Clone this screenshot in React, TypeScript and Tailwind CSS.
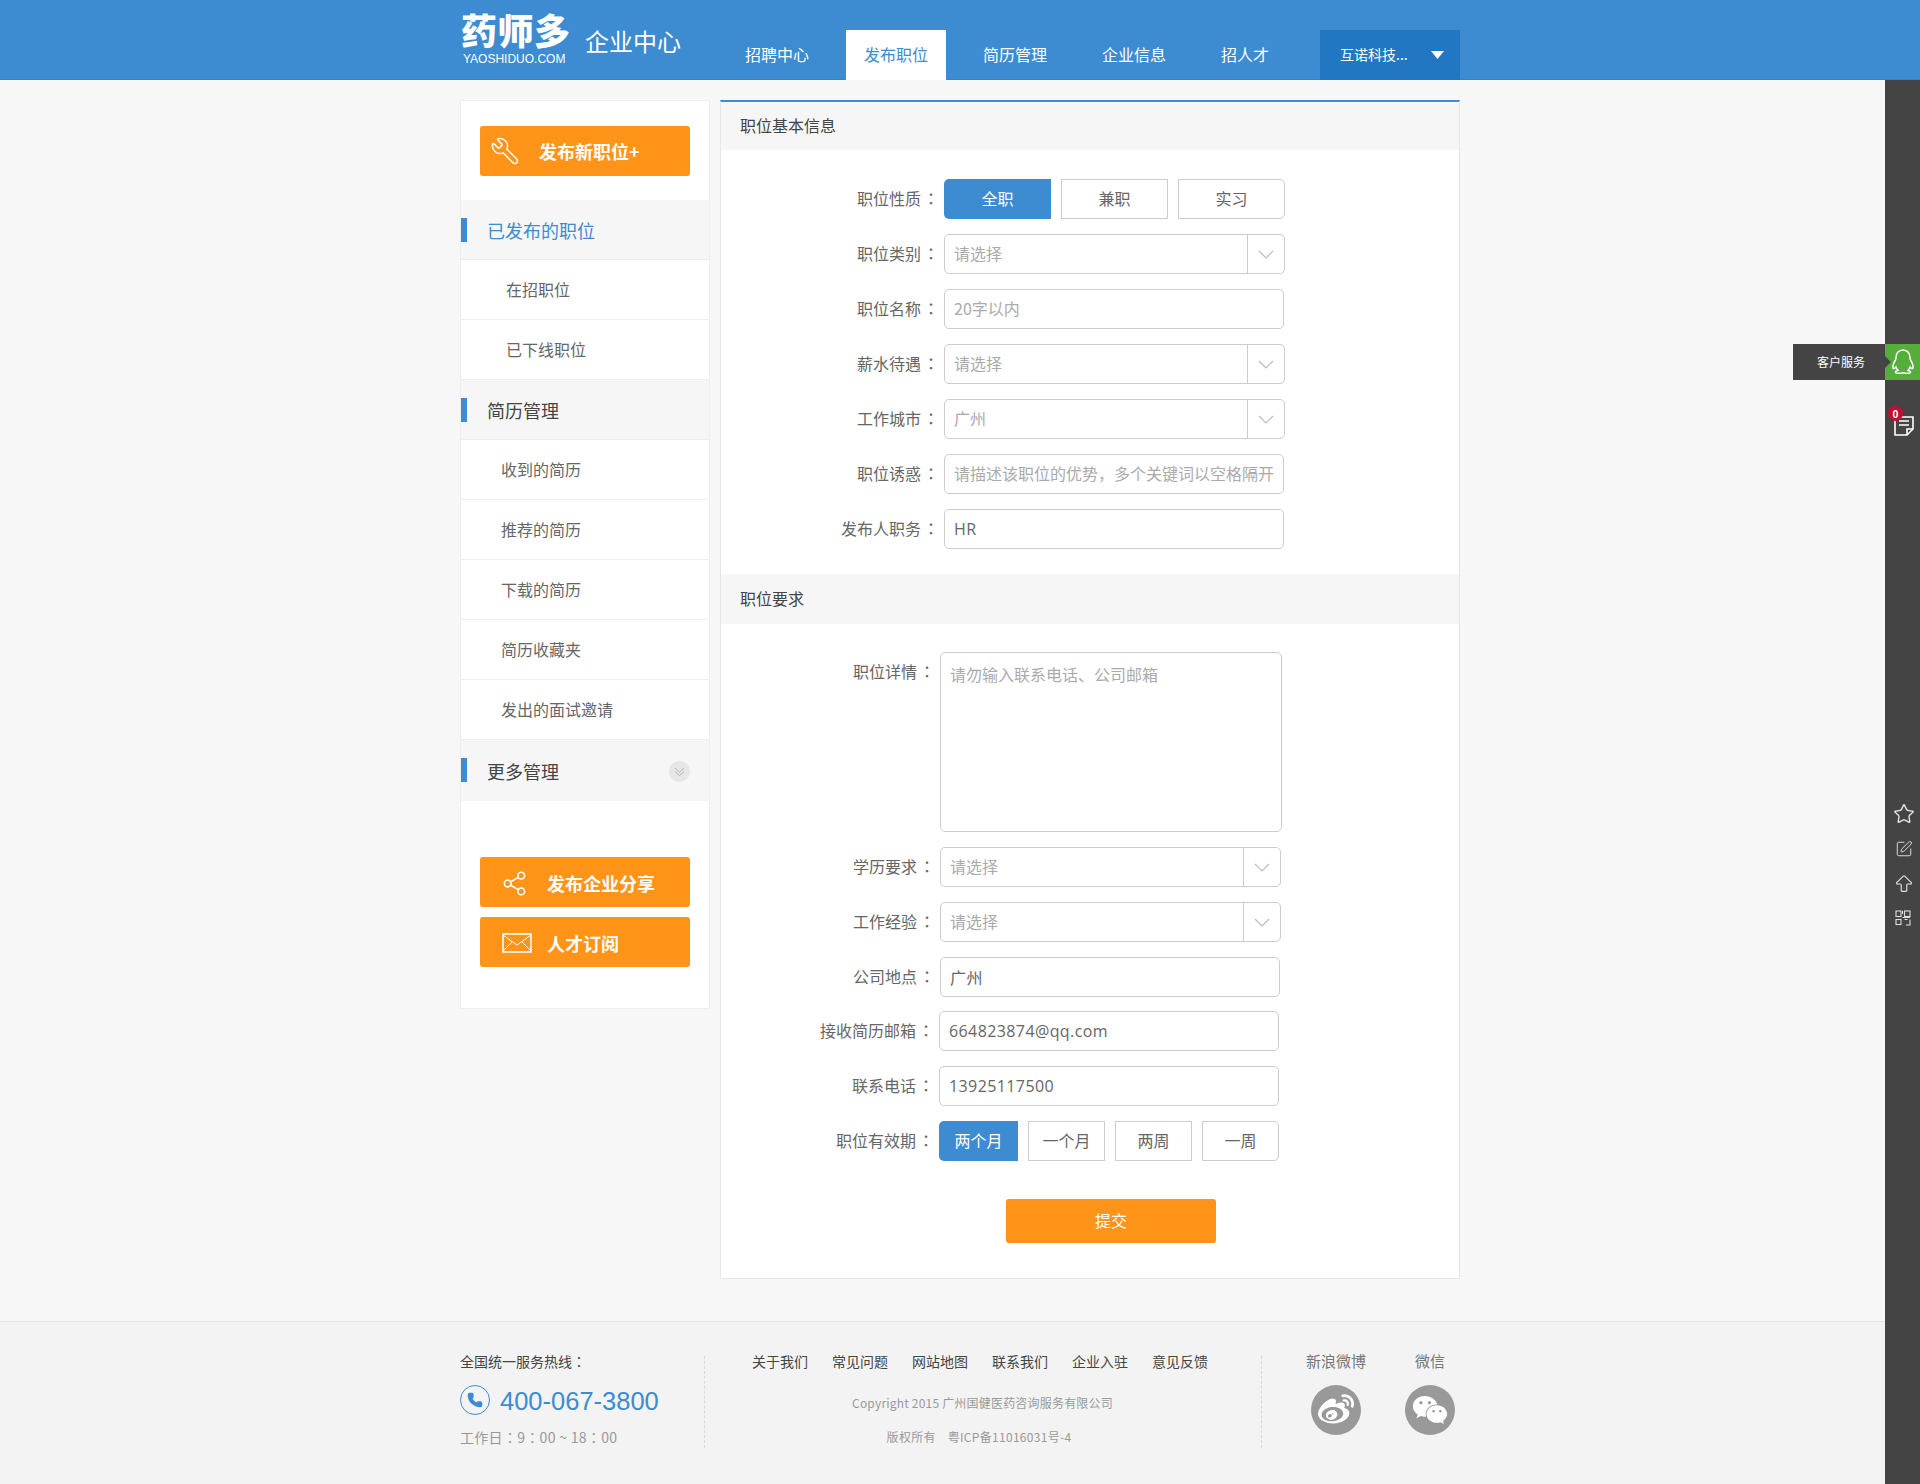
import React from "react";
import { Wrench, Share2, Phone, Star, SquarePen, ArrowBigUp } from "lucide-react";
import { FaWeibo, FaWeixin } from "react-icons/fa";

const Colon = ({ className = "" }: { className?: string }) => (
  <span className={"font-['Noto_Sans_CJK_TC',sans-serif] " + className}>：</span>
);

function Label({ text, className = "" }: { text: string; className?: string }) {
  return (
    <div className={"h-10 shrink-0 text-right text-base leading-[38px] text-[#666] " + className}>
      {text}
      <Colon className="pl-[2px]" />
    </div>
  );
}

const inputCls =
  "h-10 border border-[#ccc] rounded-[5px] px-[9px] pb-[2px] text-base bg-white outline-none placeholder:text-[#aaa]";
const valueCls =
  "h-10 border border-[#ccc] rounded-[5px] px-[9px] text-base bg-white outline-none text-[#666] font-['Open_Sans','Noto_Sans_CJK_SC',sans-serif] tracking-[0.4px]";

function Chevron() {
  return (
    <svg width="16" height="9" viewBox="0 0 16 9" fill="none" stroke="#bbb" strokeWidth="1.2">
      <polyline points="1,1 8,8 15,1" />
    </svg>
  );
}

function SelectBox({ text, className = "" }: { text: string; className?: string }) {
  return (
    <div className={"flex h-10 items-center rounded-[5px] border border-[#ccc] bg-white " + className}>
      <div className="flex-1 px-[9px] pb-[2px] text-base text-[#aaa]">{text}</div>
      <div className="flex h-full w-[37px] items-center justify-center border-l border-[#ccc]">
        <Chevron />
      </div>
    </div>
  );
}

function SideSection({ text, active, more }: { text: string; active?: boolean; more?: boolean }) {
  return (
    <div
      className={
        "relative flex items-center bg-[#f6f6f6] pl-[26px] " +
        (more ? "h-[61px]" : "h-[60px] border-b border-[#eee]")
      }
    >
      <div className="absolute left-0 top-[18px] h-6 w-1.5 bg-[#3d8bd0]" />
      <span className={"text-lg " + (active ? "text-[#3d8bd0]" : "text-[#444]")}>{text}</span>
      {more && (
        <div className="ml-auto mr-[19px] mt-[2px] flex h-[21px] w-[21px] items-center justify-center rounded-full bg-[#e6e6e6]">
          <svg width="11" height="10" viewBox="0 0 11 10" fill="none" stroke="#aaa" strokeWidth="0.8">
            <polyline points="1,1 5.5,5 10,1" />
            <polyline points="1,4.5 5.5,8.5 10,4.5" />
          </svg>
        </div>
      )}
    </div>
  );
}

function SideItem({ text, pl }: { text: string; pl: string }) {
  return (
    <div className={"flex h-[60px] items-center border-b border-[#eee] pb-[2px] text-base text-[#666] " + pl}>{text}</div>
  );
}

function OrangeButton({ icon, text, cls }: { icon: React.ReactNode; text: string; cls: string }) {
  return (
    <div className={"flex h-[50px] w-[210px] items-center rounded-[3px] bg-[#ff9419] text-lg font-bold text-white " + cls}>
      {icon}
      <span>{text}</span>
    </div>
  );
}

function Choice({ text, active, className = "" }: { text: string; active?: boolean; className?: string }) {
  return (
    <div
      className={
        "flex h-10 items-center justify-center pb-[2px] text-base " +
        (active ? "bg-[#3d8bd0] text-white " : "border border-[#ccc] bg-white text-[#666] ") +
        className
      }
    >
      {text}
    </div>
  );
}

function SectionTitle({ text }: { text: string }) {
  return <div className="flex h-[50px] items-center bg-[#f6f6f6] pb-[2px] pl-[19px] text-base text-[#444]">{text}</div>;
}

export default function App() {
  const navs = ["招聘中心", "发布职位", "简历管理", "企业信息", "招人才"];
  const links = ["关于我们", "常见问题", "网站地图", "联系我们", "企业入驻", "意见反馈"];
  return (
    <div className="relative h-[1484px] overflow-hidden bg-[#f7f7f7] font-['Noto_Sans_CJK_SC',sans-serif]">
      {/* Header */}
      <header className="h-20 border-b border-[#3a84c6] bg-[#3d8bd0]">
        <div className="mx-auto flex h-20 w-[1000px]">
          <div className="w-[125px] pl-px pt-[7px] text-white">
            <div className="text-[36px] font-black leading-[44px] tracking-[0.5px]">药师多</div>
            <div className="mt-px pl-[2px] font-['Liberation_Sans',sans-serif] text-xs leading-[15px]">YAOSHIDUO.COM</div>
          </div>
          <div className="w-[142px] pt-[23px] text-2xl leading-9 text-white">企业中心</div>
          <nav className="flex items-end gap-[19px]">
            {navs.map((n, i) => (
              <div
                key={n}
                className={
                  "flex h-[50px] items-center justify-center pb-[2px] text-base " +
                  (i === 1 ? "w-[100px] bg-white text-[#3d8bd0]" : "px-[18px] text-white")
                }
              >
                {n}
              </div>
            ))}
          </nav>
          <div className="ml-auto mt-[30px] flex h-[50px] w-[140px] items-center bg-[#2277c2] pl-5 text-sm text-white">
            <span className="w-[91px] pb-[2px]">互诺科技...</span>
            <svg width="13" height="8" viewBox="0 0 13 8" fill="#fff">
              <polygon points="0,0 13,0 6.5,8" />
            </svg>
          </div>
        </div>
      </header>

      {/* Body */}
      <div className="mx-auto mt-5 flex h-[1179px] w-[1000px] items-start justify-between">
        {/* Sidebar */}
        <aside className="h-[909px] w-[250px] border border-[#eee] bg-white">
          <div className="px-[19px] pt-[25px]">
            <OrangeButton
              cls="gap-[19px] pl-[10px]"
              text="发布新职位+"
              icon={<Wrench size={30} strokeWidth={1.2} className="-scale-x-100" />}
            />
          </div>
          <div className="mt-6">
            <SideSection text="已发布的职位" active />
            <SideItem text="在招职位" pl="pl-[45px]" />
            <SideItem text="已下线职位" pl="pl-[45px]" />
            <SideSection text="简历管理" />
            <SideItem text="收到的简历" pl="pl-10" />
            <SideItem text="推荐的简历" pl="pl-10" />
            <SideItem text="下载的简历" pl="pl-10" />
            <SideItem text="简历收藏夹" pl="pl-10" />
            <SideItem text="发出的面试邀请" pl="pl-10" />
            <SideSection text="更多管理" more />
          </div>
          <div className="flex flex-col gap-2.5 px-[19px] pt-14">
            <OrangeButton
              cls="gap-[19px] pl-[21px] pt-[2px]"
              text="发布企业分享"
              icon={<Share2 size={27} strokeWidth={1.4} />}
            />
            <OrangeButton
              cls="gap-[15px] pl-[22px] pt-[2px]"
              text="人才订阅"
              icon={
                <svg width="30" height="20" viewBox="0 0 30 20" fill="none" stroke="#fff">
                  <rect x="1" y="1" width="28" height="18" strokeWidth="1.6" />
                  <polyline points="1,2 15,12 29,2" strokeWidth="1" />
                  <line x1="1" y1="18" x2="10" y2="9" strokeWidth="1" />
                  <line x1="29" y1="18" x2="20" y2="9" strokeWidth="1" />
                </svg>
              }
            />
          </div>
        </aside>

        {/* Main */}
        <main className="h-[1179px] w-[740px] border-x border-b border-t-2 border-[#e6e6e6] border-t-[#3d8bd0] bg-white">
          <div className="h-12 overflow-hidden">
            <div className="-mt-px">
              <SectionTitle text="职位基本信息" />
            </div>
          </div>
          <div className="flex flex-col gap-[15px] pt-[29px]">
            <div className="flex">
              <Label text="职位性质" className="w-[218px]" />
              <div className="ml-[5px] flex gap-2.5">
                <Choice text="全职" active className="w-[107px] rounded-l-[5px]" />
                <Choice text="兼职" className="w-[107px]" />
                <Choice text="实习" className="w-[107px] rounded-r-[5px]" />
              </div>
            </div>
            <div className="flex">
              <Label text="职位类别" className="w-[218px]" />
              <SelectBox text="请选择" className="ml-[5px] w-[341px]" />
            </div>
            <div className="flex">
              <Label text="职位名称" className="w-[218px]" />
              <input readOnly placeholder="20字以内" className={"ml-[5px] w-[340px] " + inputCls} />
            </div>
            <div className="flex">
              <Label text="薪水待遇" className="w-[218px]" />
              <SelectBox text="请选择" className="ml-[5px] w-[341px]" />
            </div>
            <div className="flex">
              <Label text="工作城市" className="w-[218px]" />
              <SelectBox text="广州" className="ml-[5px] w-[341px]" />
            </div>
            <div className="flex">
              <Label text="职位诱惑" className="w-[218px]" />
              <input
                readOnly
                placeholder="请描述该职位的优势，多个关键词以空格隔开"
                className={"ml-[5px] w-[340px] " + inputCls}
              />
            </div>
            <div className="flex">
              <Label text="发布人职务" className="w-[218px]" />
              <input readOnly value="HR" className={"ml-[5px] w-[340px] " + valueCls} />
            </div>
          </div>

          <div className="mt-[25px]">
            <SectionTitle text="职位要求" />
          </div>

          <div className="flex flex-col pt-7">
            <div className="flex">
              <Label text="职位详情" className="w-[214px]" />
              <textarea
                readOnly
                placeholder="请勿输入联系电话、公司邮箱"
                className="ml-[5px] h-[180px] w-[342px] resize-none rounded-[5px] border border-[#ccc] px-[9px] py-[9px] text-base leading-6 text-[#666] outline-none placeholder:text-[#aaa]"
              />
            </div>
            <div className="mt-[15px] flex">
              <Label text="学历要求" className="w-[214px]" />
              <SelectBox text="请选择" className="ml-[5px] w-[341px]" />
            </div>
            <div className="mt-[15px] flex">
              <Label text="工作经验" className="w-[214px]" />
              <SelectBox text="请选择" className="ml-[5px] w-[341px]" />
            </div>
            <div className="mt-[15px] flex">
              <Label text="公司地点" className="w-[214px]" />
              <input readOnly value="广州" className={"ml-[5px] w-[340px] " + valueCls} />
            </div>
            <div className="mt-[14px] flex">
              <Label text="接收简历邮箱" className="w-[213px]" />
              <input readOnly value="664823874@qq.com" className={"ml-[5px] w-[340px] " + valueCls} />
            </div>
            <div className="mt-[15px] flex">
              <Label text="联系电话" className="w-[213px]" />
              <input readOnly value="13925117500" className={"ml-[5px] w-[340px] " + valueCls} />
            </div>
            <div className="mt-[15px] flex">
              <Label text="职位有效期" className="w-[213px]" />
              <div className="ml-[5px] flex gap-2.5">
                <Choice text="两个月" active className="w-[79px] rounded-l-[5px]" />
                <Choice text="一个月" className="w-[77px]" />
                <Choice text="两周" className="w-[77px]" />
                <Choice text="一周" className="w-[77px] rounded-r-[5px]" />
              </div>
            </div>
            <div className="ml-[285px] mt-[38px] flex h-11 w-[210px] items-center justify-center rounded-[3px] bg-[#ff9419] pb-[2px] text-base text-white">
              提交
            </div>
          </div>
        </main>
      </div>

      {/* Footer */}
      <footer className="mt-[42px] h-[163px] border-t border-[#e6e6e6] bg-[#f3f3f3]">
        <div className="mx-auto flex w-[1000px] pt-[34px]">
          <div className="h-[92px] w-[245px] shrink-0 border-r border-dashed border-[#d8d8d8]">
            <div className="-mt-[2px] text-sm leading-[14px] text-[#444]">
              全国统一服务热线
              <Colon />
            </div>
            <div className="mt-[17px] flex h-[30px] items-center gap-2.5">
              <div className="flex h-[30px] w-[30px] shrink-0 items-center justify-center rounded-full border border-[#3d8bd0]">
                <Phone size={16} fill="#3d8bd0" stroke="#3d8bd0" />
              </div>
              <span className="pt-[3px] font-['Liberation_Sans',sans-serif] text-[25.500px] text-[#3d8bd0]">400-067-3800</span>
            </div>
            <div className="mt-[13px] text-sm leading-[18px] tracking-[0.3px] text-[#999]">
              工作日
              <Colon />9
              <Colon />
              00 ~ 18
              <Colon />
              00
            </div>
          </div>
          <div className="w-[556px] shrink-0 text-center">
            <div className="-mt-[2px] flex justify-center gap-6 pr-[6px] text-sm leading-[14px] text-[#444]">
              {links.map((l) => (
                <span key={l}>{l}</span>
              ))}
            </div>
            <div className="mt-[27px] pr-px text-xs leading-4 tracking-[0.2px] text-[#999]">
              Copyright 2015 广州国健医药咨询服务有限公司
            </div>
            <div className="mt-[18px] pr-2 text-xs leading-4 tracking-[0.3px] text-[#999]">
              版权所有&nbsp;&nbsp;&nbsp;&nbsp;粤ICP备11016031号-4
            </div>
          </div>
          <div className="flex h-[92px] w-[199px] shrink-0 border-l border-dashed border-[#d8d8d8] pl-[27px] text-center text-[15px] text-[#777]">
            <div className="w-[94px] shrink-0">
              <div className="-mt-[2px] leading-[14px]">新浪微博</div>
              <div className="mx-auto mt-[17px] flex h-[50px] w-[50px] items-center justify-center rounded-full bg-[#999]">
                <FaWeibo size={36} color="#fff" />
              </div>
            </div>
            <div className="w-[94px] shrink-0">
              <div className="-mt-[2px] leading-[14px]">微信</div>
              <div className="mx-auto mt-[17px] flex h-[50px] w-[50px] items-center justify-center rounded-full bg-[#999]">
                <FaWeixin size={36} color="#fff" />
              </div>
            </div>
          </div>
        </div>
      </footer>

      {/* Right floating bar */}
      <div className="absolute bottom-0 right-0 top-20 w-[35px] bg-[#444]" />
      <div className="absolute right-[35px] top-[344px] flex h-9 w-[92px] items-center justify-center bg-[#444] pl-1 text-xs text-white">
        客户服务
      </div>
      <div className="absolute right-0 top-[344px] flex h-9 w-[35px] items-center justify-center bg-[#55ae3a]">
        <svg width="24" height="28" viewBox="0 0 24 28" fill="none" stroke="#fff" strokeWidth="1.5">
          <path d="M12 2c-4.500 0-7 3.500-7 7.500 0 1-.2 2-.8 3C3 14.500 1.500 17.500 2 20c.6 1 2 .2 3-1 .5 1.500 1.200 2.500 2 3.300-1.500.5-2.800 1-2.500 2.200.5 1.200 5 1 7.500.2 2.500.8 7 1 7.500-.2.300-1.200-1-1.700-2.500-2.200.8-.8 1.500-1.800 2-3.300 1 1.200 2.400 2 3 1 .5-2.500-1-5.500-2.200-7.500-.6-1-.8-2-.8-3C19 5.500 16.500 2 12 2z" />
        </svg>
      </div>
      <div className="absolute left-[1885px] top-[356px] h-0 w-0 border-y-[6px] border-l-[6px] border-y-transparent border-l-[#444]" />
      <svg className="absolute left-[1893px] top-[414px]" width="22" height="22" viewBox="0 0 22 22" fill="none" stroke="#fff" strokeWidth="1.6">
        <path d="M2 3h18v12l-6 6H2z" />
        <path d="M20 15h-6v6" />
        <path d="M6 7h10M6 11h10" strokeWidth="1.3" />
      </svg>
      <div className="absolute left-[1888px] top-[406px] flex h-[15px] w-[15px] items-center justify-center rounded-full bg-[#c30d33] text-[10px] font-bold leading-none text-white">
        0
      </div>
      <Star className="absolute left-[1893px] top-[803px] text-[#ddd]" size={22} strokeWidth={1.6} />
      <SquarePen className="absolute left-[1895px] top-[840px] text-[#ddd]" size={18} strokeWidth={1.3} />
      <ArrowBigUp className="absolute left-[1893px] top-[873px] text-[#ddd]" size={22} strokeWidth={1.3} />
      <svg className="absolute left-[1895px] top-[910px]" width="16" height="16" viewBox="0 0 16 16" fill="none" stroke="#ddd" strokeWidth="1.1">
        <rect x="1" y="1" width="5" height="5.500" />
        <rect x="9.500" y="1" width="5.500" height="5.500" />
        <rect x="1" y="9.500" width="5" height="5" />
        <path d="M9.500 9.500h3M15 9.500v5.500H11M7.500 1v3M7.500 7.500H15" />
      </svg>
    </div>
  );
}
